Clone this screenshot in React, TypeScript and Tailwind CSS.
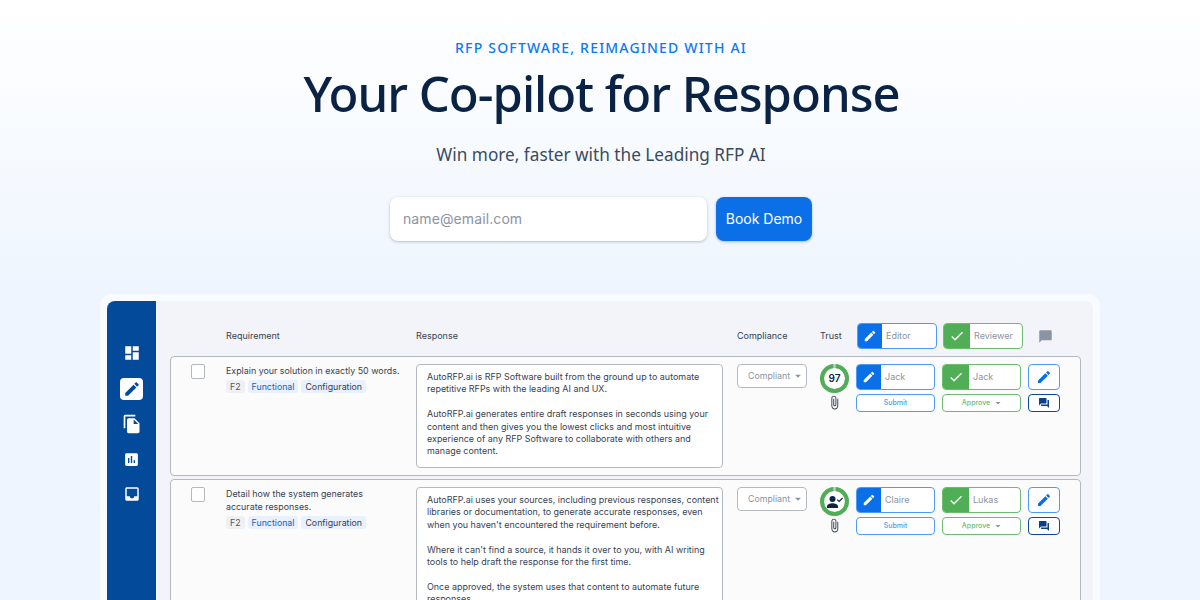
import React from 'react';
import {
  MdDashboard,
  MdEdit,
  MdFileCopy,
  MdAssessment,
  MdInbox,
  MdCheck,
  MdChatBubble,
  MdQuestionAnswer,
  MdAttachFile,
  MdArrowDropDown,
} from 'react-icons/md';

const inter = 'font-["Inter",sans-serif]';

const Tag: React.FC<{ label: string; blue?: boolean; grey?: boolean }> = ({ label, blue, grey }) => (
  <span
    className={`h-[13px] rounded-[3px] px-[4px] text-[8.8px] leading-[13px] ${
      grey ? 'bg-[#eef0f4] text-[#4b5563]' : 'bg-[#e8f1fd]'
    } ${blue ? 'text-[#1d5fb4]' : grey ? '' : 'text-[#374151]'}`}
  >
    {label}
  </span>
);

const Assignee: React.FC<{ name: string; green?: boolean }> = ({ name, green }) => (
  <div
    className={`flex h-[26px] w-[79px] overflow-hidden rounded-[4px] border bg-white ${
      green ? 'border-[#6dbb70]' : 'border-[#4d9bf5]'
    }`}
  >
    <div
      className={`flex h-full items-center justify-center text-white ${
        green ? 'w-[26px] bg-[#4fae56]' : 'w-[24px] bg-[#0b6fe8]'
      }`}
    >
      {green ? <MdCheck size={16} /> : <MdEdit size={14} />}
    </div>
    <span className="pl-[4px] text-[9px] leading-[24px] text-[#8a94a3]">{name}</span>
  </div>
);

// person with a tick, as shown in the trust ring of the second row
const PersonCheck = () => (
  <svg width="16" height="14" viewBox="0 0 16 14" fill="currentColor">
    <circle cx="5.5" cy="4" r="3" />
    <path d="M0 13v-1.6C0 9.4 3.2 8.2 5.5 8.2s5.5 1.2 5.5 3.2V13z" />
    <path d="M10.2 4.6l1.9 1.9L15.6 3" fill="none" stroke="currentColor" strokeWidth="1.2" />
  </svg>
);

const Ring: React.FC<{ children: React.ReactNode }> = ({ children }) => (
  <div className="relative flex h-[29px] w-[29px] items-center justify-center rounded-full bg-white text-[10px] font-semibold text-[#0b2545]">
    <svg viewBox="0 0 29 29" className="absolute inset-0 h-full w-full -rotate-90">
      <circle cx="14.5" cy="14.5" r="12.5" fill="none" stroke="#c9cdd3" strokeWidth="4" />
      <circle cx="14.5" cy="14.5" r="12.5" fill="none" stroke="#4fae56" strokeWidth="4" pathLength="100" strokeDasharray="97 3" strokeDashoffset="-1.5" />
    </svg>
    <span className="relative">{children}</span>
  </div>
);

const Row: React.FC<{
  height: string;
  question: React.ReactNode;
  paragraphs: string[];
  reviewer: string;
  editor: string;
  trust: React.ReactNode;
  boxHeight: string;
}> = ({ height, question, paragraphs, reviewer, editor, trust, boxHeight }) => (
  <div className={`flex w-[911px] shrink-0 rounded-[4px] border border-[#b4b9c1] bg-[#fbfbfc] pt-[7px] ${height}`}>
    <div className="w-[20px] shrink-0" />
    <div className="h-[15px] w-[14px] shrink-0 rounded-[2px] border border-[#b4b9c1] bg-white" />
    <div className="ml-[21px] w-[190px] shrink-0">
      <p className="text-[8.9px] leading-[13px] text-[#374151]">{question}</p>
      <div className="mt-[3px] flex gap-[3px]">
        <Tag label="F2" grey />
        <Tag label="Functional" blue />
        <Tag label="Configuration" />
      </div>
    </div>
    <div className={`w-[307px] shrink-0 rounded-[4px] border border-[#b4b9c1] bg-white pl-[10px] pt-[6px] ${boxHeight}`}>
      {paragraphs.map((text) => (
        <p key={text} className="mb-[12.4px] text-[8.95px] leading-[12.4px] text-[#374151]">
          {text}
        </p>
      ))}
    </div>
    <div className="ml-[14px] flex h-[24px] w-[70px] shrink-0 items-center justify-between rounded-[4px] border border-[#b4b9c1] bg-white pl-[10px] pr-[1px] text-[8.8px] text-[#8a94a3]">
      Compliant
      <MdArrowDropDown size={14} />
    </div>
    <div className="ml-[13px] flex w-[29px] shrink-0 flex-col items-center">
      <Ring>{trust}</Ring>
      <MdAttachFile size={15} className="mt-[2px] text-[#374151]" />
    </div>
    <div className="ml-[7px] flex w-[79px] shrink-0 flex-col gap-[4px]">
      <Assignee name={editor} />
      <div className="flex h-[18px] items-center justify-center rounded-[4px] border border-[#4d9bf5] bg-white text-[7px] font-medium text-[#4d9bf5]">
        Submit
      </div>
    </div>
    <div className="ml-[7px] flex w-[79px] shrink-0 flex-col gap-[4px]">
      <Assignee name={reviewer} green />
      <div className="flex h-[18px] items-center justify-center rounded-[4px] border border-[#6dbb70] bg-white pl-[3px] text-[7px] font-medium text-[#6dbb70]">
        Approve
        <MdArrowDropDown size={12} className="ml-[2px] text-[#8a94a3]" />
      </div>
    </div>
    <div className="ml-[7px] flex w-[32px] shrink-0 flex-col gap-[4px]">
      <div className="flex h-[26px] items-center justify-center rounded-[4px] border border-[#4d9bf5] bg-white text-[#0b6fe8]">
        <MdEdit size={16} />
      </div>
      <div className="flex h-[18px] items-center justify-center rounded-[4px] border border-[#0b4a9a] bg-white text-[#0b3f86]">
        <MdQuestionAnswer size={12} />
      </div>
    </div>
  </div>
);

const NavSlot: React.FC<{ children: React.ReactNode; active?: boolean }> = ({ children, active }) => (
  <div
    className={`flex h-[22px] w-[23px] items-center justify-center rounded-[4px] ${
      active ? 'bg-white text-[#044a9b]' : 'text-white'
    }`}
  >
    {children}
  </div>
);

export default function App() {
  return (
    <div className={`flex h-[600px] w-[1200px] flex-col items-center overflow-hidden bg-gradient-to-b from-white to-[#eef5fe] to-[50%] ${inter}`}>
      <p className='mt-[38px] ml-[2px] font-["Noto_Sans",sans-serif] text-[14px] leading-[20px] font-medium tracking-[1.2px] text-[#0b7af0]'>
        RFP SOFTWARE, REIMAGINED WITH AI
      </p>
      <h1 className='-mt-[1px] ml-[3px] font-["Noto_Sans",sans-serif] text-[49px] leading-[72px] font-medium tracking-[-1px] text-[#0a2243]'>
        Your Co-pilot for Response
      </h1>
      <p className='mt-[12px] ml-[2px] font-["Noto_Sans",sans-serif] text-[17.2px] leading-[28px] text-[#3a4a60]'>
        Win more, faster with the Leading RFP AI
      </p>
      <div className="mt-[28px] ml-[2px] flex gap-[9px]">
        <div className="h-[44px] w-[317px] rounded-[8px] bg-white pl-[13px] text-[14px] leading-[44px] tracking-[0.1px] text-[#8a94a3] shadow-[0_1px_3px_rgba(60,80,110,0.35)]">
          name@email.com
        </div>
        <div className="h-[44px] w-[96px] rounded-[8px] bg-[#0b6fe8] text-center text-[14px] leading-[44px] text-white shadow-[0_1px_3px_rgba(60,80,110,0.35)]">
          Book Demo
        </div>
      </div>

      <div className="mt-[53px] flex h-[400px] w-[1000px] shrink-0 rounded-[12px] bg-[#f8fbff] p-[7px]">
        <div className="flex w-[49px] shrink-0 flex-col items-center gap-[13px] rounded-tl-[8px] bg-[#044a9b] pt-[42px]">
          <NavSlot>
            <MdDashboard size={18} className="-mt-[2px]" />
          </NavSlot>
          <NavSlot active>
            <MdEdit size={18} />
          </NavSlot>
          <NavSlot>
            <MdFileCopy size={20} />
          </NavSlot>
          <NavSlot>
            <MdAssessment size={17} />
          </NavSlot>
          <NavSlot>
            <MdInbox size={18} />
          </NavSlot>
        </div>
        <div className="flex flex-1 flex-col rounded-tr-[8px] bg-[#f2f4fa] pl-[14px]">
          <div className="flex h-[55px] shrink-0 items-end pb-[7px] text-[9px] text-[#374151]">
            <span className="ml-[56px] w-[190px] leading-[26px]">Requirement</span>
            <span className="w-[321px] leading-[26px]">Response</span>
            <span className="w-[83px] leading-[26px]">Compliance</span>
            <span className="w-[37px] leading-[26px]">Trust</span>
            <div className="flex h-[26px] w-[80px] items-center overflow-hidden rounded-[4px] border border-[#4d9bf5] bg-white">
              <div className="flex h-full w-[24px] items-center justify-center bg-[#0b6fe8] text-white">
                <MdEdit size={14} />
              </div>
              <span className="pl-[4px] text-[#8a94a3]">Editor</span>
            </div>
            <div className="ml-[6px] flex h-[26px] w-[80px] items-center overflow-hidden rounded-[4px] border border-[#6dbb70] bg-white">
              <div className="flex h-full w-[26px] items-center justify-center bg-[#4fae56] text-white">
                <MdCheck size={16} />
              </div>
              <span className="pl-[4px] text-[#8a94a3]">Reviewer</span>
            </div>
            <MdChatBubble size={15} className="mb-[5px] ml-[15px] text-[#8a94a3]" />
          </div>
          <div className="flex flex-col gap-[3px]">
            <Row
              height="h-[120px]"
              boxHeight="h-[104px]"
              question="Explain your solution in exactly 50 words."
              paragraphs={[
                'AutoRFP.ai is RFP Software built from the ground up to automate repetitive RFPs with the leading AI and UX.',
                'AutoRFP.ai generates entire draft responses in seconds using your content and then gives you the lowest clicks and most intuitive experience of any RFP Software to collaborate with others and manage content.',
              ]}
              editor="Jack"
              reviewer="Jack"
              trust="97"
            />
            <Row
              height="h-[200px]"
              boxHeight="h-[180px]"
              question={
                <>
                  Detail how the system generates
                  <br />
                  accurate responses.
                </>
              }
              paragraphs={[
                "AutoRFP.ai uses your sources, including previous responses, content libraries or documentation, to generate accurate responses, even when you haven't encountered the requirement before.",
                "Where it can't find a source, it hands it over to you, with AI writing tools to help draft the response for the first time.",
                'Once approved, the system uses that content to automate future responses.',
              ]}
              editor="Claire"
              reviewer="Lukas"
              trust={<PersonCheck />}
            />
          </div>
        </div>
      </div>
    </div>
  );
}
